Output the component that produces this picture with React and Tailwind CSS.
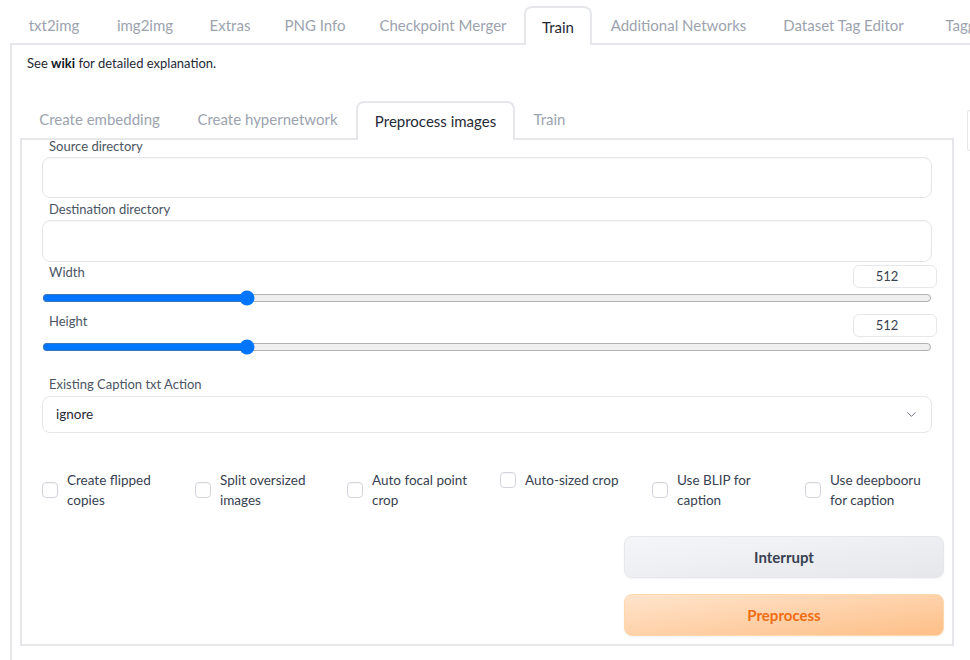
import React from "react";
import { ChevronDown } from "lucide-react";

const topTabs = [
  { label: "txt2img", w: "w-[88px]" },
  { label: "img2img", w: "w-[94px]" },
  { label: "Extras", w: "w-[76px]" },
  { label: "PNG Info", w: "w-[94px]" },
  { label: "Checkpoint Merger", w: "w-[162px]" },
  { label: "Train", w: "w-[68px]", active: true },
  { label: "Additional Networks", w: "w-[173px]" },
  { label: "Dataset Tag Editor", w: "w-[157px]" },
  { label: "Tagger", w: "w-[90px]" },
];

const innerTabs = [
  { label: "Create embedding", w: "w-[159px]" },
  { label: "Create hypernetwork", w: "w-[177px]" },
  { label: "Preprocess images", w: "w-[159px]", active: true },
  { label: "Train", w: "w-[69px]" },
];

function Tab({ t, h }) {
  if (t.active) {
    return (
      <div
        className={`${t.w} ${h} shrink-0 flex items-center justify-center whitespace-nowrap rounded-t-[8px] border-2 border-b-0 border-[#e5e7eb] bg-white text-[#1f2937] mb-[-2px] relative z-10`}
      >
        {t.label}
      </div>
    );
  }
  return (
    <div
      className={`${t.w} ${h} shrink-0 flex items-center justify-center whitespace-nowrap text-[#9ca3af]`}
    >
      {t.label}
    </div>
  );
}

function Checkbox({ lines }) {
  return (
    <div className="flex items-center gap-[9px]">
      <div className="w-[16px] h-[16px] shrink-0 rounded-[4px] border border-[#d1d5db] bg-white shadow-[inset_0_1px_1px_rgba(0,0,0,0.04)]" />
      <div className="text-[13.5px] leading-[20px] text-[#374151] whitespace-nowrap">
        {lines.map((l, i) => (
          <div key={i}>{l}</div>
        ))}
      </div>
    </div>
  );
}

function SliderRow({ label, top }) {
  return (
    <div className={top}>
      <div className="flex items-start justify-between h-[23px]">
        <div className="ml-[7px] text-[13px] leading-[14px] text-[#4b5563]">{label}</div>
        <div className="w-[84px] h-[23px] mr-[-5px] rounded-[6px] border border-[#e5e7eb] bg-white flex items-center justify-center pr-[16px] text-[13px] text-[#374151]">
          512
        </div>
      </div>
      <input
        type="range"
        min={64}
        max={2048}
        step={8}
        defaultValue={512}
        className="block w-full h-[16px] mt-[2px] m-0"
      />
    </div>
  );
}

export default function App() {
  return (
    <div className="w-[970px] h-[660px] overflow-hidden bg-white font-['Lato',sans-serif] text-[#1f2937]">
      {/* top tabs */}
      <div className="flex items-end h-[43px] pl-[10px] text-[15px]">
        {topTabs.map((t) => (
          <Tab key={t.label} t={t} h={t.active ? "h-[39px] pt-[2px]" : "h-[37px] pt-[2px]"} />
        ))}
      </div>

      {/* outer panel */}
      <div className="ml-[10px] h-[617px] border-l-2 border-t-2 border-[#e5e7eb]">
        <p className="pl-[15px] pt-[10px] text-[13px] leading-[16px] text-[#1f2937]">
          See <b className="font-bold text-[#111827]">wiki</b> for detailed explanation.
        </p>

        <div className="flex gap-[13px] pl-[8px] mt-[30px]">
          {/* inner tabs column */}
          <div className="w-[934px] shrink-0">
            <div className="flex items-end h-[37px] text-[15px]">
              {innerTabs.map((t) => (
                <Tab key={t.label} t={t} h={t.active ? "h-[39px]" : "h-[37px]"} />
              ))}
            </div>

            <div className="h-[508px] border-2 border-[#e5e7eb] px-[20px]">
              {/* Source directory */}
              <div className="ml-[7px] text-[13px] leading-[14px] text-[#4b5563] mt-[-1px]">
                Source directory
              </div>
              <div className="mt-[4px] h-[41px] rounded-[8px] border border-[#e5e7eb] bg-white shadow-[inset_0_1px_2px_rgba(0,0,0,0.04)]" />

              {/* Destination directory */}
              <div className="ml-[7px] text-[13px] leading-[14px] text-[#4b5563] mt-[4px]">
                Destination directory
              </div>
              <div className="mt-[4px] h-[42px] rounded-[8px] border border-[#e5e7eb] bg-white shadow-[inset_0_1px_2px_rgba(0,0,0,0.04)]" />

              <SliderRow label="Width" top="mt-[3px]" />
              <SliderRow label="Height" top="mt-[8px]" />

              {/* select */}
              <div className="ml-[7px] mt-[22px] text-[13px] leading-[14px] text-[#4b5563]">
                Existing Caption txt Action
              </div>
              <div className="mt-[5px] h-[37px] rounded-[8px] border border-[#e5e7eb] bg-white flex items-center justify-between pl-[13px] pr-[12px]">
                <span className="text-[13.5px] text-[#1f2937]">ignore</span>
                <ChevronDown size={15} strokeWidth={1.6} className="text-[#6b7280]" />
              </div>

              {/* checkboxes */}
              <div className="mt-[37px] grid grid-cols-[153px_152px_153px_152px_153px_153px] items-start">
                <Checkbox lines={["Create flipped", "copies"]} />
                <Checkbox lines={["Split oversized", "images"]} />
                <Checkbox lines={["Auto focal point", "crop"]} />
                <Checkbox lines={["Auto-sized crop"]} />
                <Checkbox lines={["Use BLIP for", "caption"]} />
                <Checkbox lines={["Use deepbooru", "for caption"]} />
              </div>

              {/* buttons */}
              <div className="mt-[26px] flex flex-col items-end gap-[16px] mr-[-12px]">
                <button className="w-[320px] h-[42px] rounded-[8px] border border-[#e5e7eb] bg-gradient-to-br from-[#f5f6f8] to-[#e5e7eb] text-[15px] font-bold text-[#374151] shadow-[0_1px_2px_rgba(0,0,0,0.05)]">
                  Interrupt
                </button>
                <button className="w-[320px] h-[42px] rounded-[8px] border border-[#fed7aa] bg-gradient-to-br from-[#ffe4cc] to-[#fdbf87] text-[15px] font-bold text-[#ef6d14] shadow-[0_1px_2px_rgba(0,0,0,0.05)]">
                  Preprocess
                </button>
              </div>
            </div>
          </div>

          {/* right column stub */}
          <div className="flex-1 pt-[9px]">
            <div className="h-[41px] rounded-l-[8px] border border-r-0 border-[#e5e7eb] bg-white" />
          </div>
        </div>
      </div>
    </div>
  );
}
